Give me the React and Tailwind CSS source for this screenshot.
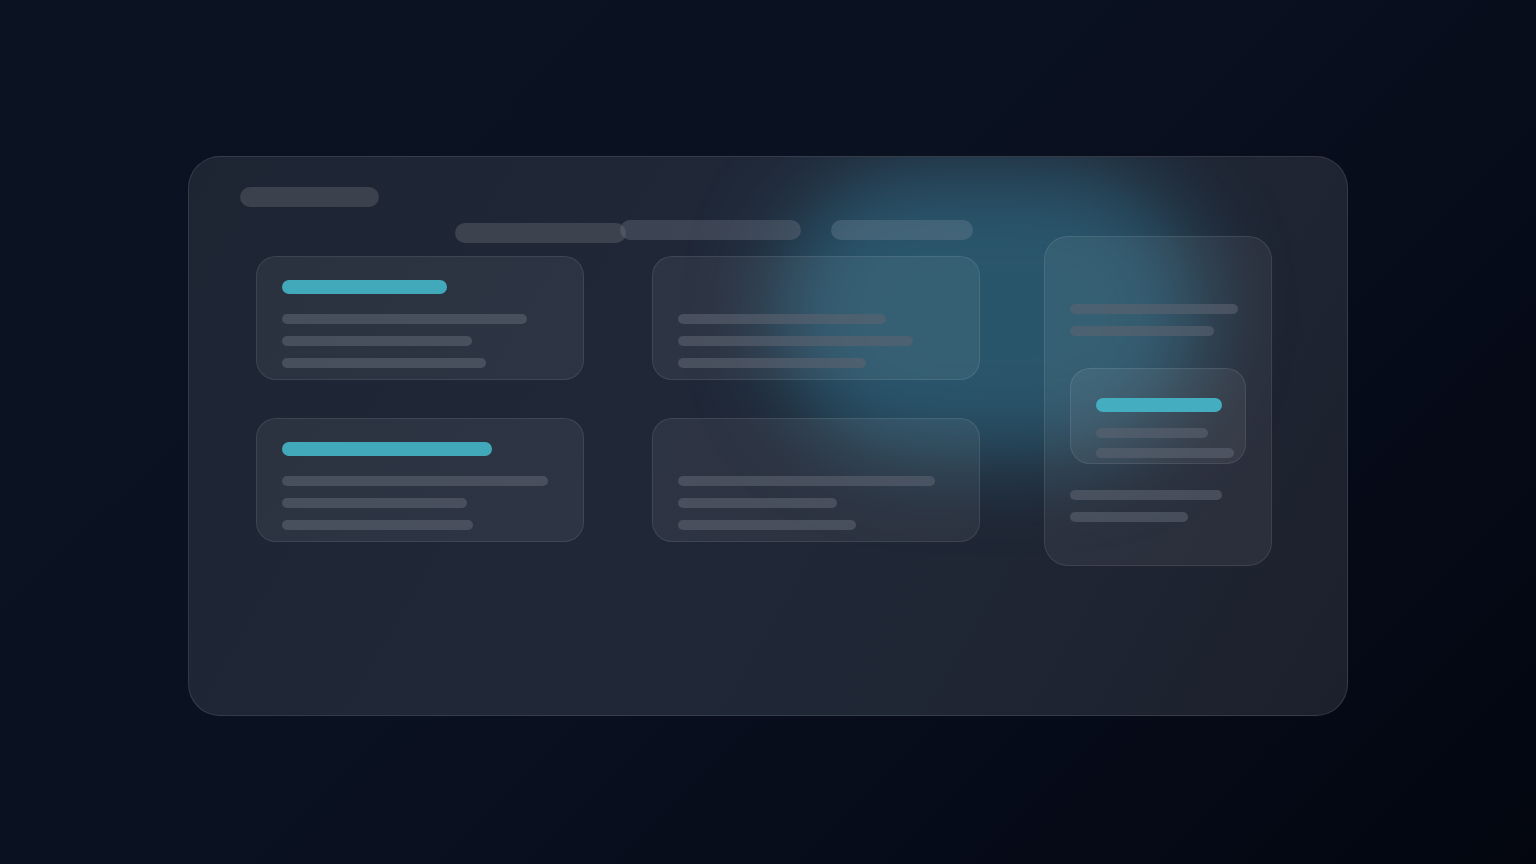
import React from "react";

const Line = ({ w, tone = "bg-[#5c6370]/60" }) => (
  <div className={`h-[10px] rounded-full ${tone}`} style={{ width: w }} />
);

const Card = ({ accent, lines }) => (
  <div className="h-[124px] w-[328px] rounded-[20px] border border-white/[0.09] bg-white/[0.06] pl-[25px] pt-[23px]">
    {accent ? (
      <div className="h-[14px] rounded-full bg-[#42a9bb]" style={{ width: accent }} />
    ) : (
      <div className="h-[14px]" />
    )}
    <div className="mt-[20px] flex flex-col gap-[12px]">
      {lines.map((w, i) => (
        <Line key={i} w={w} />
      ))}
    </div>
  </div>
);

const App = () => {
  return (
    <div className="min-h-[864px] w-full bg-[linear-gradient(135deg,#0b1322_0%,#0a1120_45%,#060b19_75%,#03060f_100%)] pt-[156px]">
      <div className="relative mx-auto h-[560px] w-[1160px] overflow-hidden rounded-[32px] border border-white/[0.1] bg-[linear-gradient(120deg,#1d2533_0%,#202838_40%,#1f2634_70%,#1c202c_100%)]">
        {/* teal glow */}
        <div className="pointer-events-none absolute left-[585px] top-[10px] h-[290px] w-[430px] rounded-full bg-[#306f88]/65 blur-[42px]" />

        <div className="relative pl-[51px] pt-[30px]">
          <div className="h-[20px] w-[139px] rounded-full bg-[#3b414d]" />

          <div className="flex items-start">
            <div className="flex flex-col">
              <div className="mt-[13px] flex items-start pl-[215px]">
                <div className="mt-[3px] h-[20px] w-[171px] rounded-full bg-[#3c424e]" />
                <div className="-ml-[6px] h-[20px] w-[181px] rounded-full bg-[#6a7080]/40" />
                <div className="ml-[30px] h-[20px] w-[142px] rounded-full bg-[#6a8090]/40" />
              </div>

              <div className="ml-[16px] mt-[13px] grid grid-cols-[328px_328px] gap-x-[68px] gap-y-[38px]">
                <Card accent={165} lines={[245, 190, 204]} />
                <Card lines={[208, 235, 188]} />
                <Card accent={210} lines={[266, 185, 191]} />
                <Card lines={[257, 159, 178]} />
              </div>
            </div>

            <div className="ml-[64px] mt-[29px] h-[330px] w-[228px] rounded-[24px] border border-white/[0.09] bg-white/[0.06] pl-[25px] pt-[67px]">
              <div className="flex flex-col gap-[12px]">
                <Line w={168} />
                <Line w={144} />
              </div>
              <div className="mt-[32px] h-[96px] w-[176px] rounded-[20px] border border-white/[0.09] bg-white/[0.06] pl-[25px] pt-[29px]">
                <div className="h-[14px] w-[126px] rounded-full bg-[#44aec0]" />
                <div className="mt-[16px] flex flex-col gap-[10px]">
                  <Line w={112} />
                  <Line w={138} />
                </div>
              </div>
              <div className="mt-[26px] flex flex-col gap-[12px]">
                <Line w={152} />
                <Line w={118} />
              </div>
            </div>
          </div>
        </div>
      </div>
    </div>
  );
};

export default App;
